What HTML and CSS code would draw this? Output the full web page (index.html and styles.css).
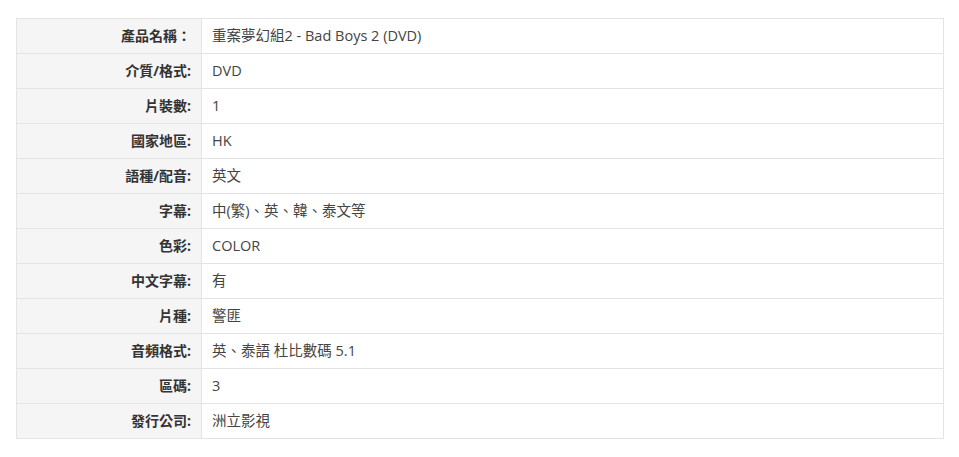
FILE: index.html
```html
<!DOCTYPE html>
<html lang="zh-Hant">
<head>
<meta charset="utf-8">
<title>產品資料</title>
<link rel="stylesheet" href="styles.css">
</head>
<body>
<div class="wrap">
<table class="spec">
<tbody>
<tr><th>產品名稱：</th><td>重案夢幻組2 - Bad Boys 2 (DVD)</td></tr>
<tr><th>介質/格式:</th><td>DVD</td></tr>
<tr><th>片裝數:</th><td>1</td></tr>
<tr><th>國家地區:</th><td>HK</td></tr>
<tr><th>語種/配音:</th><td>英文</td></tr>
<tr><th>字幕:</th><td>中(繁)、英、韓、泰文等</td></tr>
<tr><th>色彩:</th><td>COLOR</td></tr>
<tr><th>中文字幕:</th><td>有</td></tr>
<tr><th>片種:</th><td>警匪</td></tr>
<tr><th>音頻格式:</th><td>英、泰語 杜比數碼 5.1</td></tr>
<tr><th>區碼:</th><td>3</td></tr>
<tr><th>發行公司:</th><td>洲立影視</td></tr>
</tbody>
</table>
</div>
</body>
</html>
```
FILE: styles.css
```css
html, body {
  margin: 0;
  padding: 0;
  background: #ffffff;
}
.wrap {
  padding: 18px 0 0 16px;
}
.spec {
  border-collapse: collapse;
  width: 928px;
  font-family: "Open Sans", "Noto Sans CJK TC", sans-serif;
  font-size: 14px;
  color: #333333;
}
.spec th,
.spec td {
  border: 1px solid #e4e4e4;
  height: 35px;
  padding: 0 10px;
  line-height: 20px;
  box-sizing: border-box;
  vertical-align: middle;
}
.spec th {
  width: 185px;
  background: #f5f5f5;
  text-align: right;
  font-weight: 700;
  color: #333333;
  white-space: nowrap;
}
.spec td {
  text-align: left;
  font-weight: 400;
  color: #444444;
  font-size: 14.5px;
}
```
